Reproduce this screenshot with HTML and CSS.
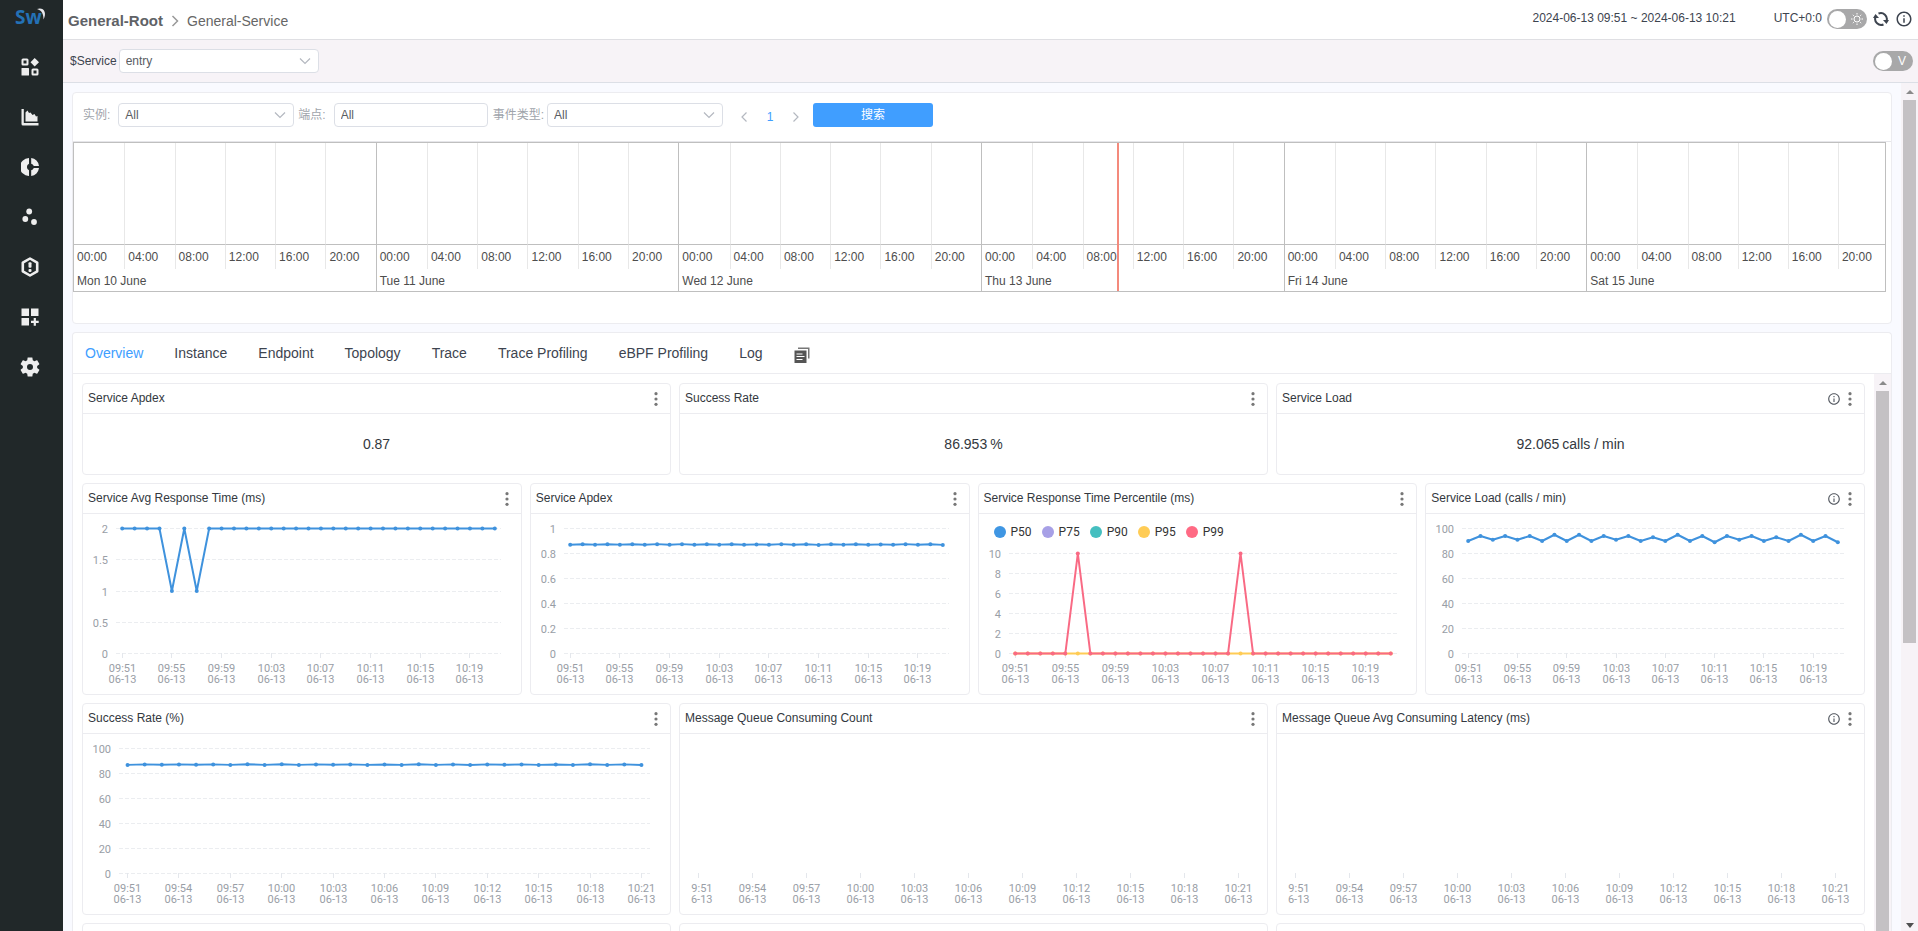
FILE: index.html
```html
<!DOCTYPE html>
<html lang="zh-CN">
<head>
<meta charset="utf-8">
<title>General-Service</title>
<link rel="stylesheet" href="styles.css">
</head>
<body>
<svg class="defs" aria-hidden="true">
  <symbol id="chevron" viewBox="0 0 12 8"><path d="M1 1.500l5 5 5-5" fill="none" stroke="#b4b8c0" stroke-width="1.200"/></symbol>
  <symbol id="info" viewBox="0 0 24 24"><path d="M11 7h2v2h-2zm0 4h2v6h-2zm1-9C6.480 2 2 6.480 2 12s4.480 10 10 10 10-4.480 10-10S17.520 2 12 2zm0 18c-4.410 0-8-3.590-8-8s3.590-8 8-8 8 3.590 8 8-3.590 8-8 8z"/></symbol>
  <symbol id="dots" viewBox="0 0 4 16"><circle cx="2" cy="2.700" r="1.600"/><circle cx="2" cy="8" r="1.600"/><circle cx="2" cy="13.300" r="1.600"/></symbol>
</svg>
<div class="app">
  <nav class="side">
    <svg class="logo" viewBox="0 0 34 26" role="img" aria-label="SkyWalking"><text x="2" y="20" class="logo-text">Sw</text><path d="M24 5c6-2.500 10.500 3 6.500 10.500 0-5.500-1.500-9-6.500-10.500z" fill="#e8e8ec"/></svg>
    <a href="#" aria-label="Dashboards"><svg viewBox="0 0 18 18"><g fill="none" stroke="#eee" stroke-width="2"><rect x="1.500" y="1.500" width="5" height="5" rx=".5"/><rect x="11.500" y="11.500" width="5" height="5" rx=".5"/></g><rect x=".5" y="10" width="7.500" height="7.500" rx=".5"/><path d="M13.700 0l4.300 4.200-4.300 4.200-4.200-4.200z"/></svg></a>
    <a href="#" aria-label="Charts"><svg viewBox="0 0 18 18"><path d="M.5 1h2.300v14h14.700v2.500h-15.500q-1.500 0-1.500-1.500z"/><path d="M4.500 13.500v-9l2-2 1.500 2.500 1.500-.5 2 2.500 2-1 1.500 2.500 1.500-.5v5.500z"/></svg></a>
    <a href="#" aria-label="Services"><svg viewBox="0 0 18 18"><path d="M8 0v5.800a3.500 3.500 0 0 0 0 6.400v5.800a9 9 0 0 1 0-18zM10.200 0a9 9 0 0 1 7.800 7.900h-5.200a4 4 0 0 0-2.600-2.200zM10.200 18a9 9 0 0 0 7.800-7.900h-5.200a4 4 0 0 1-2.600 2.200z"/></svg></a>
    <a href="#" aria-label="Topology"><svg viewBox="0 0 18 18"><circle cx="8.200" cy="3.500" r="2.900"/><circle cx="4.300" cy="11" r="2.900"/><circle cx="13" cy="14" r="2.900"/></svg></a>
    <a href="#" aria-label="Alarms"><svg class="tall" viewBox="0 0 18 20"><path d="M9 1.500l7.200 4.200v8.600l-7.200 4.200-7.200-4.200v-8.600z" fill="none" stroke="#eee" stroke-width="2.600" stroke-linejoin="round"/><rect x="7.500" y="5.300" width="3" height="5.500" rx="1"/><rect x="7.500" y="12" width="3" height="3" rx="1"/></svg></a>
    <a href="#" aria-label="Widgets"><svg viewBox="0 0 18 18"><path d="M.5.500h7.500v7.500h-7.500zM10 .500h7.500v7.500h-7.500zM.5 10h7.500v7.500h-7.500zM12.700 10h2.200v2.700h2.800v2.200h-2.800v2.800h-2.200v-2.800h-2.700v-2.200h2.700z"/></svg></a>
    <a href="#" aria-label="Settings"><svg class="tall" viewBox="2 2 20 20"><path d="M19.140 12.940c.04-.3.060-.610.060-.940 0-.320-.020-.640-.070-.940l2.030-1.580c.18-.14.230-.410.120-.610l-1.920-3.320c-.12-.22-.37-.29-.59-.22l-2.390.960c-.5-.38-1.030-.7-1.620-.940l-.36-2.540c-.04-.24-.24-.410-.48-.410h-3.840c-.24 0-.43.170-.47.410l-.36 2.540c-.59.240-1.130.570-1.620.940l-2.390-.960c-.22-.08-.47 0-.59.220L2.740 8.870c-.12.210-.08.470.12.610l2.030 1.580c-.05.300-.09.630-.09.940s.02.640.07.940l-2.030 1.580c-.18.14-.23.410-.12.610l1.920 3.320c.12.22.37.29.59.22l2.390-.96c.5.38 1.030.7 1.620.94l.36 2.540c.05.24.24.41.48.41h3.840c.24 0 .44-.17.47-.41l.36-2.540c.59-.24 1.130-.56 1.620-.94l2.390.96c.22.080.47 0 .59-.22l1.920-3.320c.12-.22.070-.47-.12-.61l-2.010-1.580zM12 15a3 3 0 1 1 0-6 3 3 0 0 1 0 6z"/></svg></a>
  </nav>
  <div class="page">
    <header class="top">
      <a href="#" class="crumb-root">General-Root</a>
      <svg class="crumb-sep" viewBox="0 0 8 12"><path d="M1.500 1l5 5-5 5" fill="none" stroke="#999" stroke-width="1.500"/></svg>
      <span class="crumb">General-Service</span>
      <div class="top-right">
        <span class="range">2024-06-13 09:51 ~ 2024-06-13 10:21</span>
        <span>UTC+0:0</span>
        <label class="switch"><input type="checkbox" aria-label="Theme"><svg viewBox="0 0 14 14"><g fill="none" stroke="#fff"><circle cx="7" cy="7" r="3"/><path d="M7 1v1.500M7 11.500v1.500M1 7h1.500M11.500 7h1.500M2.800 2.800l1 1M10.200 10.200l1 1M11.200 2.800l-1 1M3.800 10.200l-1 1"/></g></svg></label>
        <button class="icon-btn" aria-label="Reload"><svg class="i16" viewBox="0 0 16 16"><g fill="none" stroke="#3d444f" stroke-width="2"><path d="M5.500 2.500a6 6 0 0 1 8 7.500"/><path d="M10.500 13.500a6 6 0 0 1-8-7.500"/></g><path d="M10 9h6l-2.500 4zM0 7h6l-3.500-4z" fill="#3d444f"/></svg></button>
        <button class="icon-btn" aria-label="Info"><svg class="i18"><use href="#info"/></svg></button>
      </div>
    </header>
    <div class="tools">
      <label for="svc">$Service</label>
      <span class="select svc"><select id="svc"><option>entry</option></select><svg><use href="#chevron"/></svg></span>
      <label class="switch view"><input type="checkbox" aria-label="View"><span>V</span></label>
    </div>
    <div class="body">
      <main class="content">
        <section class="panel events">
          <form class="filters">
            <label for="inst">实例:</label>
            <span class="select f-inst"><select id="inst"><option>All</option></select><svg><use href="#chevron"/></svg></span>
            <label for="ep">端点:</label>
            <input id="ep" class="text" type="text" value="All">
            <label for="type">事件类型:</label>
            <span class="select f-type"><select id="type"><option>All</option></select><svg><use href="#chevron"/></svg></span>
            <div class="pager">
              <button type="button" aria-label="Previous"><svg viewBox="0 0 6 10"><path d="M5.500.500l-4.500 4.500 4.500 4.500"/></svg></button>
              <button type="button" class="on">1</button>
              <button type="button" aria-label="Next"><svg viewBox="0 0 6 10"><path d="M.5.500l4.500 4.500-4.500 4.500"/></svg></button>
            </div>
            <button type="button" class="search">搜索</button>
          </form>
          <div class="timeline" id="timeline"><i class="now"></i></div>
        </section>
        <section class="panel board">
          <div class="tabs">
            <a href="#" class="active">Overview</a><a href="#">Instance</a><a href="#">Endpoint</a><a href="#">Topology</a><a href="#">Trace</a><a href="#">Trace Profiling</a><a href="#">eBPF Profiling</a><a href="#">Log</a>
            <button class="icon-btn" aria-label="Copy"><svg class="i16" viewBox="0 0 16 16"><path d="M4 .5h11.500v11h-1.500v-9.500h-10z" fill="#777"/><path d="M.5 3.500h12v12.500h-12z" fill="#555"/><path d="M2.500 7h6M2.500 9.500h8M2.500 12.500h6" stroke="#fff" stroke-width="1.200"/></svg></button>
          </div>
          <div class="board-body">
            <div class="grid">
              <article class="card c4"><h2>Service Apdex<button aria-label="More"><svg class="dots"><use href="#dots"/></svg></button></h2><p class="stat">0.87</p></article>
              <article class="card c4"><h2>Success Rate<button aria-label="More"><svg class="dots"><use href="#dots"/></svg></button></h2><p class="stat">86.953<span>%</span></p></article>
              <article class="card c4"><h2>Service Load<svg class="tip"><use href="#info"/></svg><button aria-label="More"><svg class="dots"><use href="#dots"/></svg></button></h2><p class="stat">92.065<span>calls / min</span></p></article>
              <article class="card c3"><h2>Service Avg Response Time (ms)<button aria-label="More"><svg class="dots"><use href="#dots"/></svg></button></h2><svg class="chart" data-chart="avg"></svg></article>
              <article class="card c3"><h2>Service Apdex<button aria-label="More"><svg class="dots"><use href="#dots"/></svg></button></h2><svg class="chart" data-chart="apdex"></svg></article>
              <article class="card c3"><h2>Service Response Time Percentile (ms)<button aria-label="More"><svg class="dots"><use href="#dots"/></svg></button></h2>
                <div class="chart-box"><svg class="chart" data-chart="pct"></svg>
                <ul class="legend"><li class="p50">P50</li><li class="p75">P75</li><li class="p90">P90</li><li class="p95">P95</li><li class="p99">P99</li></ul></div></article>
              <article class="card c3"><h2>Service Load (calls / min)<svg class="tip"><use href="#info"/></svg><button aria-label="More"><svg class="dots"><use href="#dots"/></svg></button></h2><svg class="chart" data-chart="load"></svg></article>
              <article class="card c4"><h2>Success Rate (%)<button aria-label="More"><svg class="dots"><use href="#dots"/></svg></button></h2><svg class="chart" data-chart="success"></svg></article>
              <article class="card c4"><h2>Message Queue Consuming Count<button aria-label="More"><svg class="dots"><use href="#dots"/></svg></button></h2><svg class="chart" data-chart="empty"></svg></article>
              <article class="card c4"><h2>Message Queue Avg Consuming Latency (ms)<svg class="tip"><use href="#info"/></svg><button aria-label="More"><svg class="dots"><use href="#dots"/></svg></button></h2><svg class="chart" data-chart="empty"></svg></article>
              <article class="card c4 next"></article><article class="card c4 next"></article><article class="card c4 next"></article>
            </div>
            <div class="scroll"><i class="up"></i><i class="thumb full"></i></div>
          </div>
        </section>
      </main>
      <div class="scroll outer"><i class="up"></i><i class="thumb"></i><i class="down"></i></div>
    </div>
  </div>
</div>
<script src="app.js"></script>
</body>
</html>
```
FILE: styles.css
```css
* { box-sizing: border-box; }
body { margin: 0; font: 12px/16px "Liberation Sans", Arial, "Noto Sans CJK SC", sans-serif; color: #3d444f; overflow: hidden; }
a { color: inherit; text-decoration: none; }
button { border: 0; background: none; padding: 0; font: inherit; color: inherit; display: flex; align-items: center; justify-content: center; }
svg { fill: #eee; flex: none; }
.defs { display: none; }
.app { display: flex; height: 100vh; }

.side { width: 63px; flex: none; background: #212829; display: flex; flex-direction: column; align-items: center; padding: 4px 3px 0 0; }
.side a { height: 50px; display: flex; align-items: center; justify-content: center; }
.side a svg { width: 18px; height: 18px; }
.side a .tall { width: 20px; height: 20px; }
.logo { width: 34px; height: 26px; margin-bottom: 12px; overflow: visible; }
.logo-text { font: bold 19px/24px "Open Sans", sans-serif; fill: #2471b5; }

.page { flex: 1; min-width: 0; display: flex; flex-direction: column; }
.top { height: 40px; flex: none; border-bottom: 1px solid #dfdfe3; display: flex; align-items: center; padding: 2px 5px 0; font-size: 14px; color: #666; background: #fff; }
.crumb-root { font-size: 15px; font-weight: bold; color: #606266; }
.crumb-sep { width: 8px; height: 12px; margin: 1px 8px 0; }
.top-right { margin-left: auto; display: flex; align-items: center; font-size: 12px; line-height: 20px; color: #3d444f; padding-bottom: 5px; }
.range { margin-right: 38px; }
.switch { width: 40px; height: 20px; border-radius: 10px; background: #a8a8a9; display: flex; align-items: center; color: #fff; margin: 2px 0 0 5px; }
.switch input { appearance: none; width: 17px; height: 17px; border-radius: 50%; background: #fff; margin: 0 4px 0 2px; flex: none; }
.switch svg { width: 14px; height: 14px; }
.icon-btn svg { fill: #3d444f; }
.i16 { width: 16px; height: 16px; }
.i18 { width: 18px; height: 18px; }
.top .icon-btn { margin: 2px 0 0 6px; }

.tools { height: 43px; flex: none; background: #f7f3f7; border-bottom: 1px solid #dcdfe6; display: flex; align-items: center; padding: 0 5px 0 7px; }
.tools .view { margin: 0 0 0 auto; }
.view span { margin-left: 2px; }
.select { position: relative; display: block; height: 24px; }
.select select, .text { appearance: none; width: 100%; height: 24px; border: 1px solid #dcdfe6; border-radius: 4px; background: #fff; padding: 0 6px; font: inherit; color: #5a5d63; outline: 0; }
.select svg { position: absolute; right: 8px; top: 8px; width: 12px; height: 8px; pointer-events: none; }
.svc { width: 200px; margin-left: 2px; }

.body { flex: 1; min-height: 0; display: flex; background: #f9faff; overflow: hidden; }
.content { flex: 1; min-width: 0; padding: 9px 9px 0; display: flex; flex-direction: column; gap: 8px; }
.panel { background: #fff; border: 1px solid #ececf0; border-radius: 4px; }
.events { padding-bottom: 31px; flex: none; }
.filters { height: 49px; border-bottom: 1px solid #e6e6ea; display: flex; align-items: center; padding: 0 10px 4px; color: #a0a4ab; }
.f-inst { width: 176px; margin: 0 4px 0 8px; }
.f-type { width: 176px; margin-left: 3px; }
.text.text { width: 154px; margin: 0 5px 0 8px; }
.pager { display: flex; margin: 3px 4px 0 8px; }
.pager button { width: 26px; height: 20px; }
.pager svg { width: 6px; height: 10px; fill: none; stroke: #b4b8c0; stroke-width: 1.2; }
.pager .on { color: #409eff; }
.search { width: 120px; height: 24px; border-radius: 3px; background: #409eff; color: #fff; }

.timeline { position: relative; display: grid; grid-template-columns: repeat(5, 303fr) 299fr; height: 150px; margin-right: 5px; border: 1px solid #bfbfbf; border-left: 0; color: #4d4d4d; }
.day { display: grid; grid-template: 102px 24px 1fr / repeat(6, 1fr); border-left: 1px solid #bfbfbf; min-width: 0; }
.day:nth-of-type(6) { grid-template-columns: repeat(5, 50fr) 47fr; }
.day i { border-bottom: 1px solid #bfbfbf; }
.day i + i, .day b + b { border-left: 1px solid #e8e8e8; }
.day b { font-weight: normal; padding: 4px 0 0 3px; min-width: 0; }
.day span { grid-column: 1 / -1; padding: 4px 0 0 3px; }
.now { position: absolute; left: 57.6%; top: 0; width: 2px; height: 100%; background: #f48a7c; }

.board { display: flex; flex-direction: column; flex: none; border-bottom: 0; }
.tabs { height: 41px; border-bottom: 1px solid #ececf0; display: flex; align-items: center; gap: 31px; padding-left: 12px; font-size: 14px; color: #3d444f; }
.tabs .active { color: #409eff; }
.tabs .icon-btn { margin-top: 3px; }
.board-body { display: flex; }
.grid { flex: 1; min-width: 0; display: grid; grid-template-columns: repeat(12, 1fr); gap: 8px; padding: 9px 9px 0; }
.card { border: 1px solid #ececf0; border-radius: 4px; min-width: 0; }
.c4 { grid-column: span 4; }
.c3 { grid-column: span 3; }
.next { height: 92px; }
.card h2 { margin: 0; height: 30px; border-bottom: 1px solid #ececf0; padding: 0 12px 2px 5px; font-size: 12px; font-weight: normal; line-height: 16px; color: #333840; display: flex; align-items: center; }
.card h2 button { margin: 2px 0 0 auto; }
.dots { width: 4px; height: 16px; fill: #777; }
.tip { width: 14px; height: 14px; fill: #555a62; margin: 2px 7px 0 auto; }
.card .tip + button { margin-left: 0; }
.stat { margin: 0; height: 60px; display: flex; align-items: center; justify-content: center; gap: 3px; font-size: 14px; color: #333840; }
.chart { display: block; width: calc(100% - 20px); height: 180px; margin: 0 10px; overflow: hidden; }
.chart text { font: 11px Roboto, "Liberation Sans", sans-serif; fill: #999ea6; }
.split { stroke: #ebedf0; stroke-dasharray: 4 2; }
.tick { stroke: #e4e7ec; }
.line { fill: none; stroke-width: 2; stroke-linejoin: round; }
.chart-box { position: relative; }
.legend { position: absolute; left: 15px; top: 10px; margin: 0; padding: 0; list-style: none; display: flex; gap: 10px; font: 12px/16px Roboto, sans-serif; color: #333; }
.legend li { display: flex; align-items: center; gap: 5px; }
.legend li::before { content: ""; width: 12px; height: 12px; border-radius: 50%; background: var(--dot); }
.p50 { --dot: #3f96e3; }
.p75 { --dot: #a7a0e6; }
.p90 { --dot: #45bfc0; }
.p95 { --dot: #ffcc55; }
.p99 { --dot: #ff6a84; }

.scroll { width: 17px; flex: none; background: #f7f3f7; display: flex; flex-direction: column; align-items: center; }
.scroll i { flex: none; }
.up { border: 4px solid transparent; border-top: 0; border-bottom-color: #8a8a8a; margin: 7px 0 6px; }
.thumb { width: 13px; background: #c4c1c4; }
.scroll .full { flex: 1; }
.outer .thumb { flex: 0 0 64%; }
.down { border: 4px solid transparent; border-bottom: 0; border-top: 5px solid #505050; margin: auto 0 3px; }
```
FILE: app.js
```js
const days = ['Mon 10 June', 'Tue 11 June', 'Wed 12 June', 'Thu 13 June', 'Fri 14 June', 'Sat 15 June'];
const hours = ['00:00', '04:00', '08:00', '12:00', '16:00', '20:00'];
document.getElementById('timeline').insertAdjacentHTML('afterbegin', days.map(d =>
  '<div class="day">' + '<i></i>'.repeat(6) + hours.map(h => `<b>${h}</b>`).join('') + `<span>${d}</span></div>`).join(''));

const COUNT = 31;
const load = [90, 94, 91, 94, 91, 94, 90, 95, 90, 95, 90, 94, 91, 94, 90, 93, 90, 95, 90, 94, 89, 94, 91, 94, 90, 93, 90, 95, 90, 94, 89];
const fill = (v, other) => Array.from({ length: COUNT }, (_, i) => (i in other ? other[i] : v));
const blue = '#3f92dd';
const charts = {
  avg: { ticks: [0, 0.5, 1, 1.5, 2], left: 23, step: 4, series: [[blue, fill(2, { 4: 1, 6: 1 })]] },
  apdex: { ticks: [0, 0.2, 0.4, 0.6, 0.8, 1], left: 23, step: 4, series: [[blue, load.map(v => 0.87 + (v - 90) * 0.001)]] },
  pct: { ticks: [0, 2, 4, 6, 8, 10], left: 20, top: 39, step: 4, series: [['#ffcc55', fill(0, {})], ['#f96a84', fill(0, { 5: 10, 18: 10 })]] },
  load: { ticks: [0, 20, 40, 60, 80, 100], left: 26, step: 4, series: [[blue, load]] },
  success: { ticks: [0, 20, 40, 60, 80, 100], left: 26, step: 3, series: [[blue, load.map(v => 86.9 + (v - 90) * 0.1)]] },
  empty: { ticks: [], left: 0, step: 3, series: [] }
};

function time(i) {
  const m = 51 + i;
  return m < 60 ? '09:' + m : '10:' + String(m - 60).padStart(2, '0');
}

function draw(svg) {
  const c = charts[svg.dataset.chart];
  const top = c.top || 14, bottom = 139, left = c.left, right = svg.clientWidth - 10;
  const band = (right - left) / COUNT;
  const x = i => left + band * (i + 0.5);
  const max = c.ticks[c.ticks.length - 1];
  const y = v => bottom - (bottom - top) * v / max;
  let out = '';
  c.ticks.forEach(t => {
    const gy = Math.round(y(t)) + 0.5;
    out += `<line class="split" x1="${left}" x2="${right}" y1="${gy}" y2="${gy}"/>`;
    out += `<text x="${left - 8}" y="${gy + 4}" text-anchor="end">${t}</text>`;
  });
  for (let i = 0; i < COUNT; i += c.step) {
    const tx = Math.floor(x(i)) + 0.5;
    const cut = left === 0 && i === 0 ? 1 : 0;
    const at = cut ? `x="${tx + 14}" text-anchor="end"` : `x="${tx}" text-anchor="middle"`;
    out += `<line class="tick" x1="${tx}" x2="${tx}" y1="${bottom}" y2="${bottom + 5}"/>`;
    out += `<text ${at} y="158">${time(i).slice(cut)}</text><text ${at} y="169">${'06-13'.slice(cut)}</text>`;
  }
  c.series.forEach(([color, data]) => {
    out += `<polyline class="line" stroke="${color}" points="${data.map((v, i) => x(i) + ',' + (y(v) + 0.5)).join(' ')}"/>`;
    data.forEach((v, i) => { out += `<circle cx="${x(i)}" cy="${y(v) + 0.5}" r="2" fill="${color}"/>`; });
  });
  svg.innerHTML = out;
}

const drawAll = () => document.querySelectorAll('.chart').forEach(draw);
drawAll();
addEventListener('resize', drawAll);
```
